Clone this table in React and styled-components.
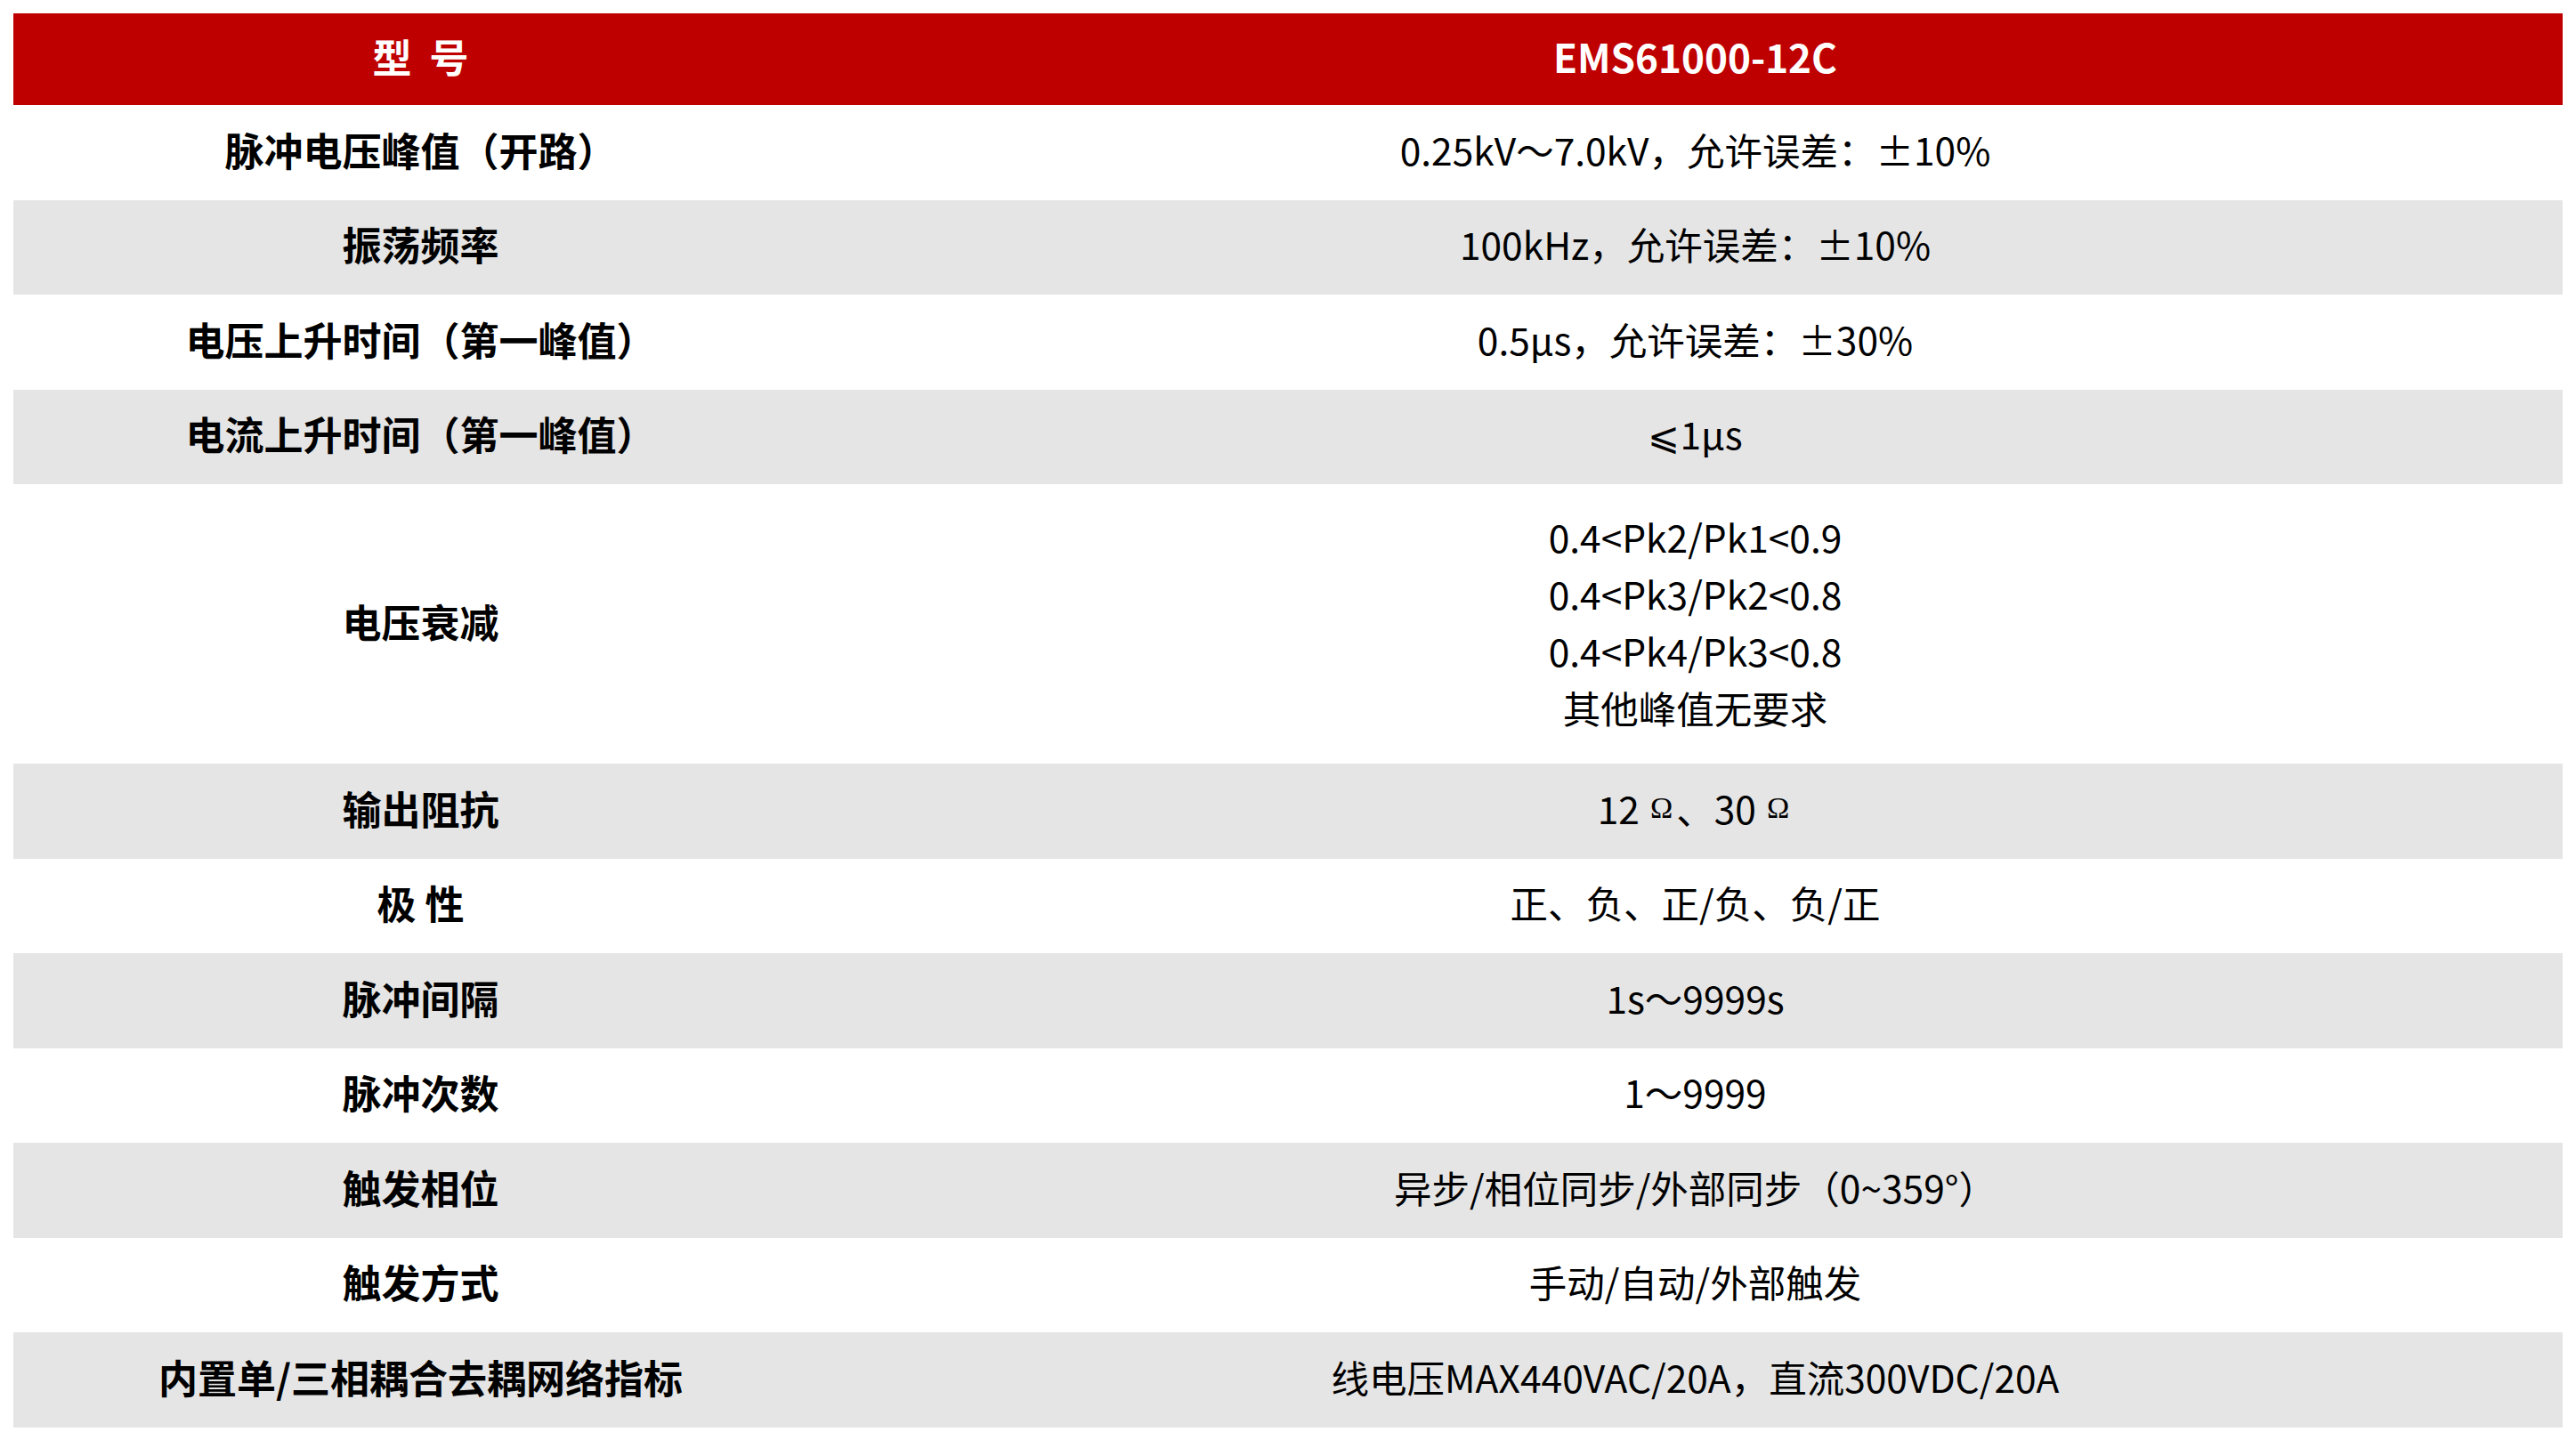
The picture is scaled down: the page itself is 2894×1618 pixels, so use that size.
import React from "react";
import styled, { createGlobalStyle } from "styled-components";

const GlobalStyle = createGlobalStyle`
  html, body {
    margin: 0;
    padding: 0;
    background: #ffffff;
  }
  body {
    font-family: "Noto Sans CJK SC", "Noto Sans", sans-serif;
    color: #000000;
  }
`;

const Page = styled.div`
  padding: 15px;
`;

const Table = styled.div`
  display: grid;
  grid-template-columns: 915px 1fr;
  width: 2864px;
`;

const Row = styled.div`
  display: contents;
`;

const Cell = styled.div`
  display: flex;
  align-items: center;
  justify-content: center;
  text-align: center;
  white-space: pre;
  min-height: ${(p) => (p.$head ? "103px" : "106.5px")};
  padding: ${(p) => (p.$tall ? "27px 0 31px" : "0 0 7px")};
  box-sizing: border-box;
  font-size: ${(p) => (p.$bold ? "44px" : "42.5px")};
  line-height: 64px;
  font-weight: ${(p) => (p.$bold ? 700 : 400)};
  background: ${(p) => (p.$head ? "#bf0000" : p.$shade ? "#e5e5e5" : "#ffffff")};
  color: ${(p) => (p.$head ? "#ffffff" : "#000000")};
`;

const Lines = styled.div`
  display: flex;
  flex-direction: column;
  align-items: center;
`;

const Ohm = styled.span`
  font-family: "Liberation Serif", "DejaVu Serif", serif;
  font-size: 34px;
  margin: 0 4px 0 12px;
`;

const rows = [
  { label: "脉冲电压峰值（开路）", value: "0.25kV～7.0kV，允许误差：±10%" },
  { label: "振荡频率", value: "100kHz，允许误差：±10%" },
  { label: "电压上升时间（第一峰值）", value: "0.5μs，允许误差：±30%" },
  { label: "电流上升时间（第一峰值）", value: "⩽1μs" },
  {
    label: "电压衰减",
    lines: ["0.4<Pk2/Pk1<0.9", "0.4<Pk3/Pk2<0.8", "0.4<Pk4/Pk3<0.8", "其他峰值无要求"],
  },
  {
    label: "输出阻抗",
    value: (
      <>
        12<Ohm>Ω</Ohm>、30<Ohm>Ω</Ohm>
      </>
    ),
  },
  { label: "极 性", value: "正、负、正/负、负/正" },
  { label: "脉冲间隔", value: "1s～9999s" },
  { label: "脉冲次数", value: "1～9999" },
  { label: "触发相位", value: "异步/相位同步/外部同步（0~359°）" },
  { label: "触发方式", value: "手动/自动/外部触发" },
  { label: "内置单/三相耦合去耦网络指标", value: "线电压MAX440VAC/20A，直流300VDC/20A" },
];

const App = () => {
  return (
    <Page>
      <GlobalStyle />
      <Table>
        <Row>
          <Cell $head $bold>型  号</Cell>
          <Cell $head $bold>EMS61000-12C</Cell>
        </Row>
        {rows.map((r, i) => {
          const shade = i % 2 === 1;
          return (
            <Row key={i}>
              <Cell $bold $shade={shade}>{r.label}</Cell>
              <Cell $shade={shade} $tall={!!r.lines}>
                {r.lines ? (
                  <Lines>
                    {r.lines.map((l) => (
                      <span key={l}>{l}</span>
                    ))}
                  </Lines>
                ) : (
                  r.value
                )}
              </Cell>
            </Row>
          );
        })}
      </Table>
    </Page>
  );
};

export default App;
